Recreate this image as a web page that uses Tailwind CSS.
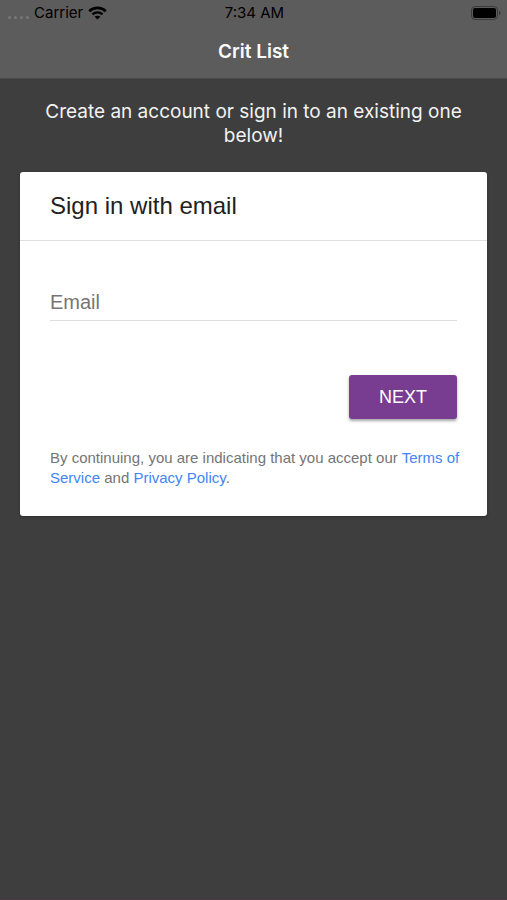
<!DOCTYPE html>
<html lang="en">
<head>
<meta charset="utf-8">
<meta name="viewport" content="width=device-width, initial-scale=1">
<title>Crit List</title>
<script src="https://cdn.jsdelivr.net/npm/@tailwindcss/browser@4"></script>
</head>
<body class="flex min-h-screen flex-col border-b border-[#4b3c46] bg-[#3e3e3e] font-['Inter',sans-serif]">
  <header class="border-b border-[#4a4a4a] bg-[#5c5c5c]">
    <div class="grid h-[26px] grid-cols-3 items-center pr-[6px] pl-2 text-[15px] leading-5 text-black">
      <div class="flex items-center gap-[5px]">
        <span class="flex gap-[3px] pt-2" aria-hidden="true">
          <span class="size-[3px] rounded-full bg-[#787878]"></span>
          <span class="size-[3px] rounded-full bg-[#787878]"></span>
          <span class="size-[3px] rounded-full bg-[#787878]"></span>
          <span class="size-[3px] rounded-full bg-[#787878]"></span>
        </span>
        <span>Carrier</span>
        <svg class="h-[14px] w-[19px]" viewBox="0 0 19 14" fill="none" stroke="#000" aria-hidden="true">
          <path d="M1.2 5.2C5.8.8 13.2.8 17.8 5.2" stroke-width="2.6"/>
          <path d="M4.4 8.4C7.3 5.7 11.7 5.7 14.6 8.4" stroke-width="2.4"/>
          <path d="M9.5 13.6 6.6 10.8C8.2 9.3 10.8 9.3 12.4 10.8Z" fill="#000" stroke="none"/>
        </svg>
      </div>
      <time class="text-center">7:34 AM</time>
      <svg class="h-[15px] w-[31px] justify-self-end" viewBox="0 0 31 15" aria-label="Battery full" role="img">
        <rect x="1.5" y=".5" width="26" height="13" rx="3.5" fill="none" stroke="#3a3a3a"/>
        <rect x="3" y="2" width="23" height="10" rx="2" fill="#000"/>
        <path d="M29 5C30.8 5.5 30.8 8.5 29 9Z" fill="#303030"/>
      </svg>
    </div>
    <h1 class="flex h-[52px] items-center justify-center text-[19px] leading-6 font-semibold text-[#fafafa]">Crit List</h1>
  </header>
  <main class="px-5 pt-[21px]">
    <p class="px-6 text-center text-[19px] leading-6 text-[#f2f2f2]">Create an account or sign in to an existing one below!</p>
    <form class="mt-6 rounded-[3px] bg-white font-['Liberation_Sans',Arial,sans-serif] shadow-[0_1px_3px_rgba(0,0,0,0.3)]">
      <h2 class="border-b border-[#e0e0e0] px-[30px] pt-5 pb-5 text-[24px] leading-7 text-[#212121]">Sign in with email</h2>
      <div class="px-[30px] pt-12 pb-7">
        <div class="grid items-center border-b border-[#dedede]">
          <input id="email" type="email" placeholder=" " class="peer col-start-1 row-start-1 block h-[31px] w-full bg-transparent text-[20px] leading-6 text-[#212121] outline-none">
          <label for="email" class="pointer-events-none col-start-1 row-start-1 -translate-y-6 pb-[6px] text-[20px] leading-6 text-[#757575] peer-placeholder-shown:translate-y-0">Email</label>
        </div>
        <div class="flex justify-end pt-[54px]">
          <button type="submit" class="h-11 min-w-27 rounded-[3px] bg-[#783c91] px-[30px] text-[18px] leading-6 text-white shadow-[0_2px_3px_rgba(0,0,0,0.35)]">NEXT</button>
        </div>
        <p class="-mr-2 pt-[29px] text-[15px] leading-5 text-[#757575]">By continuing, you are indicating that you accept our <a href="#terms" class="text-[#4285f4]">Terms of Service</a> and <a href="#privacy" class="text-[#4285f4]">Privacy Policy</a>.</p>
      </div>
    </form>
  </main>
</body>
</html>
